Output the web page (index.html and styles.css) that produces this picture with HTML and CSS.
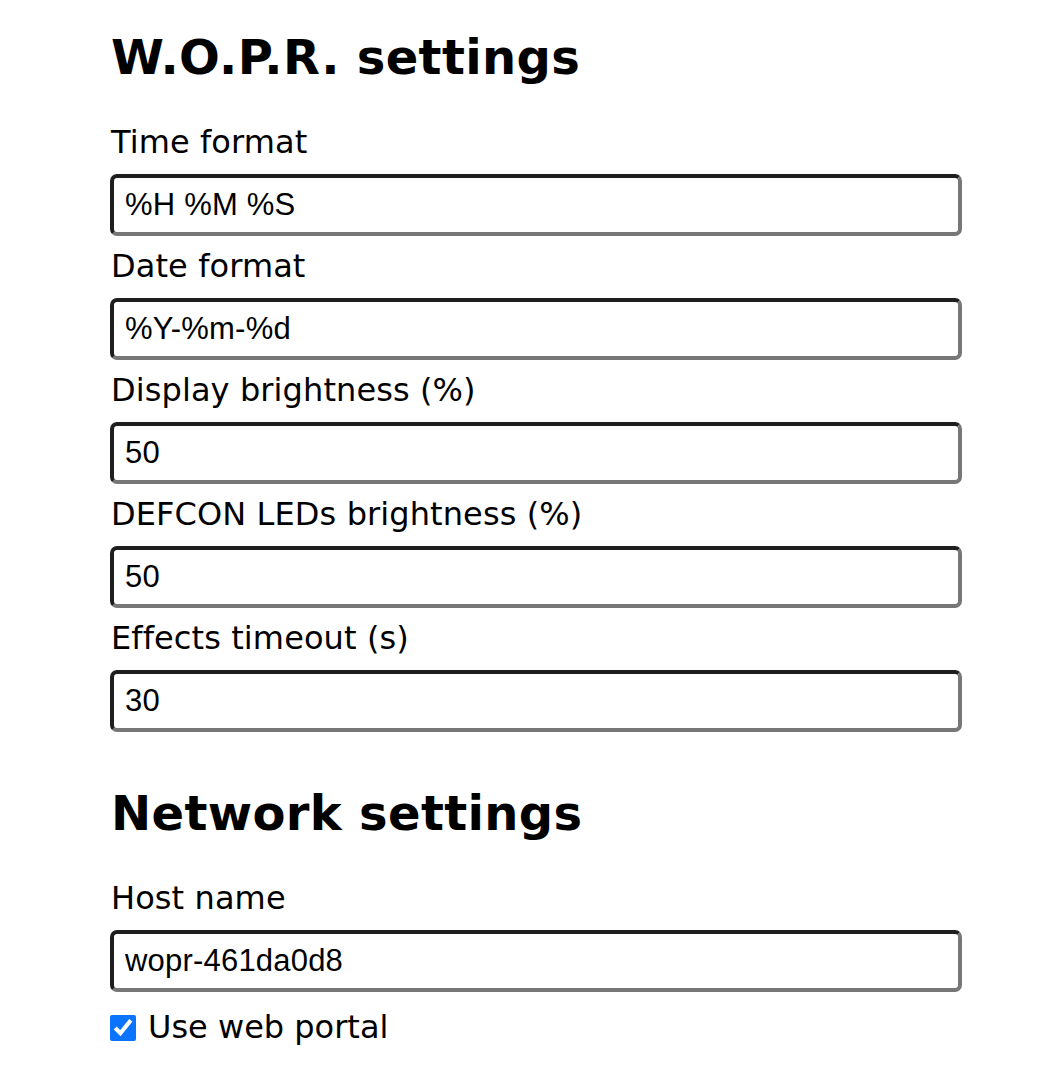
FILE: index.html
```html
<!DOCTYPE html>
<html>
<head>
<meta charset="utf-8">
<link rel="stylesheet" href="styles.css">
</head>
<body>
<main class="page">
  <section class="section">
    <h2 class="title">W.O.P.R. settings</h2>
    <div class="field">
      <label class="label" for="tf">Time format</label>
      <input class="input" id="tf" type="text" value="%H %M %S">
    </div>
    <div class="field">
      <label class="label" for="df">Date format</label>
      <input class="input" id="df" type="text" value="%Y-%m-%d">
    </div>
    <div class="field">
      <label class="label" for="db">Display brightness (%)</label>
      <input class="input" id="db" type="text" value="50">
    </div>
    <div class="field">
      <label class="label" for="lb">DEFCON LEDs brightness (%)</label>
      <input class="input" id="lb" type="text" value="50">
    </div>
    <div class="field">
      <label class="label" for="et">Effects timeout (s)</label>
      <input class="input" id="et" type="text" value="30">
    </div>
  </section>
  <section class="section section-net">
    <h2 class="title">Network settings</h2>
    <div class="field">
      <label class="label" for="hn">Host name</label>
      <input class="input" id="hn" type="text" value="wopr-461da0d8">
    </div>
    <label class="check-row">
      <input class="check" type="checkbox" checked>
      <span class="check-text">Use web portal</span>
    </label>
  </section>
</main>
</body>
</html>
```

FILE: styles.css
```css
html, body {
  margin: 0;
  padding: 0;
  background: #fff;
}
body {
  font-family: "DejaVu Sans", Verdana, sans-serif;
  color: #000;
}
.page {
  width: 852px;
  margin-left: 110px;
  padding-top: 29px;
}
.section-net {
  margin-top: 53px;
}
.title {
  margin: 0 0 39px 1px;
  font-size: 48px;
  font-weight: bold;
  line-height: 56px;
  letter-spacing: 0.35px;
}
.field {
  display: flex;
  flex-direction: column;
}
.field + .field {
  margin-top: 12px;
}
.label {
  display: block;
  font-size: 32px;
  line-height: 37px;
  padding-left: 1px;
  letter-spacing: 0.1px;
}
.input {
  margin: 13px 0 0 0;
  box-sizing: border-box;
  width: 852px;
  height: 62px;
  padding: 0 11px;
  border: 4px solid;
  border-color: #1e1e1e #777 #777 #1e1e1e;
  border-radius: 7px;
  font-family: "Liberation Sans", Arial, sans-serif;
  font-size: 31px;
  letter-spacing: 0.2px;
  color: #000;
  background: #fff;
  outline: none;
}
.check-row {
  display: flex;
  align-items: center;
  margin-top: 17px;
  height: 37px;
  font-size: 32px;
  line-height: 37px;
}
.check {
  margin: 0 12px 0 0;
  width: 26px;
  height: 26px;
  accent-color: #0a74ff;
}
.check-text {
  display: block;
}
```
